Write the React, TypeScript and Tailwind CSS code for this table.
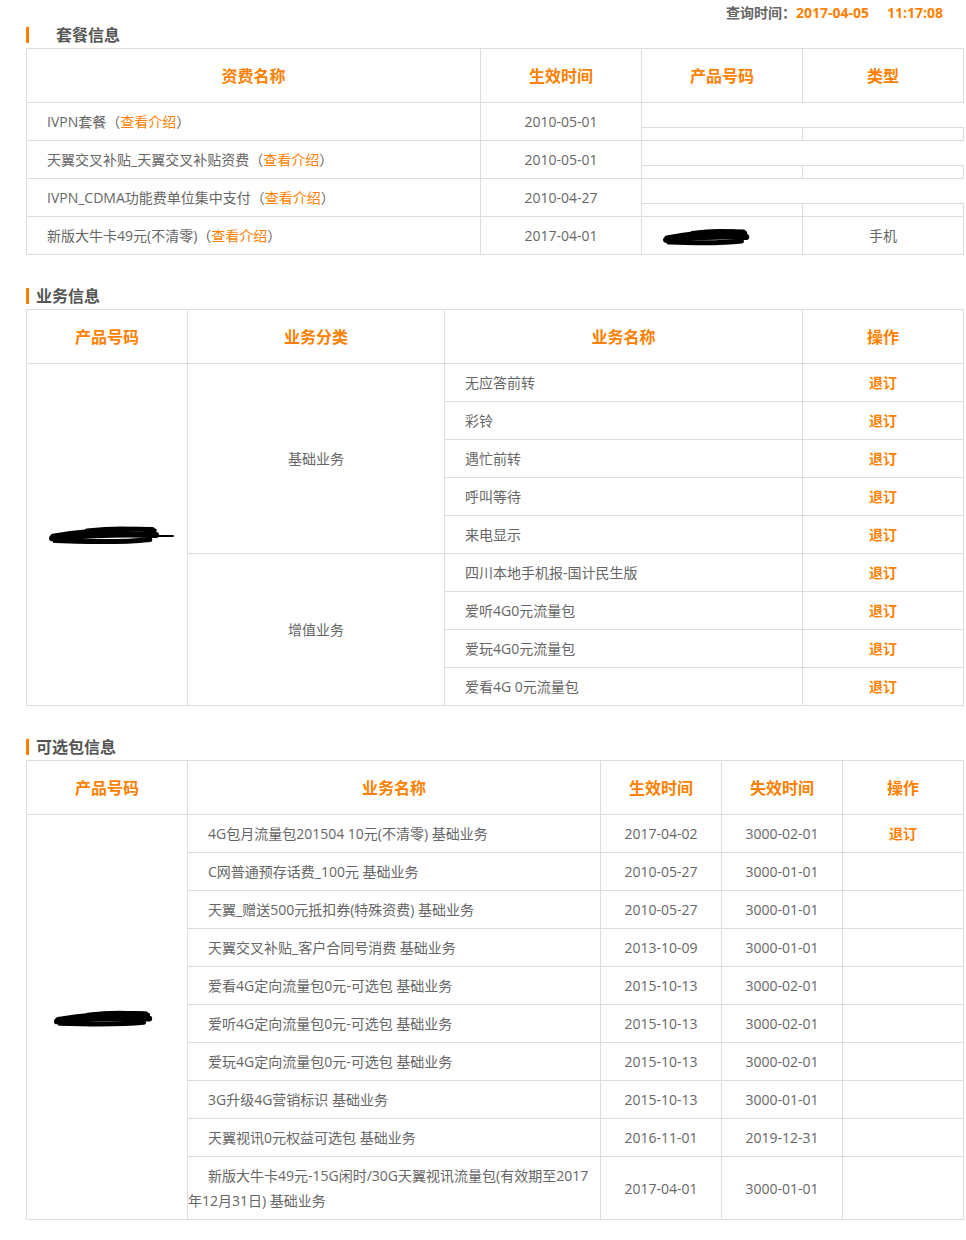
import React from 'react';

const ORANGE = 'text-[#ff7f00]';

// black scribble used to hide phone numbers
function Scribble({ w, h, tail = false }: { w: number; h: number; tail?: boolean }) {
  return (
    <svg width={w} height={h} viewBox={`0 0 ${w} ${h}`} className="inline-block">
      <g fill="none" stroke="#000" strokeLinecap="round" strokeLinejoin="round">
        <path d={`M4 ${h * 0.55} C${w * 0.25} ${h * 0.35}, ${w * 0.55} ${h * 0.2}, ${w * 0.82} ${h * 0.25}`} strokeWidth={5} />
        <path d={`M3 ${h * 0.65} C${w * 0.3} ${h * 0.5}, ${w * 0.6} ${h * 0.45}, ${w * 0.85} ${h * 0.5}`} strokeWidth={6} />
        <path d={`M6 ${h * 0.75} C${w * 0.3} ${h * 0.8}, ${w * 0.55} ${h * 0.85}, ${w * 0.8} ${h * 0.7}`} strokeWidth={5} />
        <path d={`M${w * 0.3} ${h * 0.3} C${w * 0.45} ${h * 0.2}, ${w * 0.65} ${h * 0.15}, ${w * 0.84} ${h * 0.3}`} strokeWidth={4} />
        {tail && <path d={`M${w * 0.8} ${h * 0.55} L${w - 2} ${h * 0.55}`} strokeWidth={2} />}
      </g>
    </svg>
  );
}

function Title({ text, indent }: { text: string; indent: string }) {
  return (
    <div className="h-[24px] flex items-center pb-[2px]">
      <span className="w-[3px] h-[16px] bg-[#ff7f00]" />
      <span className={`${indent} text-[16px] font-bold text-[#555]`}>{text}</span>
    </div>
  );
}

const th = `border border-[#ddd] h-[54px] text-center text-[16px] font-bold ${ORANGE}`;
const td = 'border border-[#ddd] h-[38px] text-center';
const tdName = 'border border-[#ddd] h-[38px] text-left indent-[20px]';

function Intro({ name }: { name: string }) {
  return (
    <>
      {name}（<span className={ORANGE}>查看介绍</span>）
    </>
  );
}

const packages = [
  { name: 'IVPN套餐', date: '2010-05-01' },
  { name: '天翼交叉补贴_天翼交叉补贴资费', date: '2010-05-01' },
  { name: 'IVPN_CDMA功能费单位集中支付', date: '2010-04-27' },
];

const basic = ['无应答前转', '彩铃', '遇忙前转', '呼叫等待', '来电显示'];
const extra = ['四川本地手机报-国计民生版', '爱听4G0元流量包', '爱玩4G0元流量包', '爱看4G 0元流量包'];

const optional = [
  { name: '4G包月流量包201504 10元(不清零) 基础业务', start: '2017-04-02', end: '3000-02-01', op: true },
  { name: 'C网普通预存话费_100元 基础业务', start: '2010-05-27', end: '3000-01-01' },
  { name: '天翼_赠送500元抵扣券(特殊资费) 基础业务', start: '2010-05-27', end: '3000-01-01' },
  { name: '天翼交叉补贴_客户合同号消费 基础业务', start: '2013-10-09', end: '3000-01-01' },
  { name: '爱看4G定向流量包0元-可选包 基础业务', start: '2015-10-13', end: '3000-02-01' },
  { name: '爱听4G定向流量包0元-可选包 基础业务', start: '2015-10-13', end: '3000-02-01' },
  { name: '爱玩4G定向流量包0元-可选包 基础业务', start: '2015-10-13', end: '3000-02-01' },
  { name: '3G升级4G营销标识 基础业务', start: '2015-10-13', end: '3000-01-01' },
  { name: '天翼视讯0元权益可选包 基础业务', start: '2016-11-01', end: '2019-12-31' },
];

export default function App() {
  return (
    <div
      className="w-[966px] bg-white pl-[26px] pr-[3px] pb-[20px] text-[14px] text-[#666]"
      style={{ fontFamily: '"Open Sans", "Noto Sans CJK SC", sans-serif' }}
    >
      <div className="h-[24px] flex items-center justify-end pr-[20px] text-[14px] font-bold">
        <span className="text-[#666]">查询时间：</span>
        <span className={ORANGE}>2017-04-05</span>
        <span className={`${ORANGE} ml-[18px]`}>11:17:08</span>
      </div>

      <Title text="套餐信息" indent="ml-[27px]" />
      <table className="w-full table-fixed border-collapse">
        <colgroup>
          <col className="w-[454px]" />
          <col className="w-[161px]" />
          <col className="w-[161px]" />
          <col className="w-[161px]" />
        </colgroup>
        <tbody>
          <tr>
            <td className={th}>资费名称</td>
            <td className={th}>生效时间</td>
            <td className={th}>产品号码</td>
            <td className={th}>类型</td>
          </tr>
          {packages.map((p) => (
            <tr key={p.name}>
              <td className={tdName}>
                <Intro name={p.name} />
              </td>
              <td className={td}>{p.date}</td>
              <td colSpan={2} className="p-0 h-[38px] border-l border-b border-[#ddd] align-top">
                <div className="h-[24px]" />
                <div className="flex h-[13px] border-t border-[#ddd]">
                  <div className="w-[161px] border-r border-[#ddd]" />
                  <div className="flex-1 border-r border-[#ddd]" />
                </div>
              </td>
            </tr>
          ))}
          <tr>
            <td className={tdName}>
              <Intro name="新版大牛卡49元(不清零)" />
            </td>
            <td className={td}>2017-04-01</td>
            <td className={td}>
              <span className="inline-block -ml-[20px]">
                <Scribble w={98} h={20} />
              </span>
            </td>
            <td className={td}>手机</td>
          </tr>
        </tbody>
      </table>

      <div className="mt-[30px]">
        <Title text="业务信息" indent="ml-[7px]" />
      </div>
      <table className="w-full table-fixed border-collapse">
        <colgroup>
          <col className="w-[161px]" />
          <col className="w-[257px]" />
          <col className="w-[358px]" />
          <col className="w-[161px]" />
        </colgroup>
        <tbody>
          <tr>
            <td className={th}>产品号码</td>
            <td className={th}>业务分类</td>
            <td className={th}>业务名称</td>
            <td className={th}>操作</td>
          </tr>
          {basic.map((b, i) => (
            <tr key={b}>
              {i === 0 && (
                <td rowSpan={9} className="border border-[#ddd] text-center">
                  <span className="inline-block ml-[10px]">
                    <Scribble w={126} h={22} tail />
                  </span>
                </td>
              )}
              {i === 0 && (
                <td rowSpan={5} className="border border-[#ddd] text-center">
                  基础业务
                </td>
              )}
              <td className={tdName}>{b}</td>
              <td className={`${td} font-bold ${ORANGE}`}>退订</td>
            </tr>
          ))}
          {extra.map((b, i) => (
            <tr key={b}>
              {i === 0 && (
                <td rowSpan={4} className="border border-[#ddd] text-center">
                  增值业务
                </td>
              )}
              <td className={tdName}>{b}</td>
              <td className={`${td} font-bold ${ORANGE}`}>退订</td>
            </tr>
          ))}
        </tbody>
      </table>

      <div className="mt-[30px]">
        <Title text="可选包信息" indent="ml-[7px]" />
      </div>
      <table className="w-full table-fixed border-collapse">
        <colgroup>
          <col className="w-[161px]" />
          <col className="w-[413px]" />
          <col className="w-[121px]" />
          <col className="w-[121px]" />
          <col className="w-[121px]" />
        </colgroup>
        <tbody>
          <tr>
            <td className={th}>产品号码</td>
            <td className={th}>业务名称</td>
            <td className={th}>生效时间</td>
            <td className={th}>失效时间</td>
            <td className={th}>操作</td>
          </tr>
          {optional.map((o, i) => (
            <tr key={o.name}>
              {i === 0 && (
                <td rowSpan={10} className="border border-[#ddd] text-center">
                  <span className="inline-block ml-[6px]">
                    <Scribble w={112} h={19} />
                  </span>
                </td>
              )}
              <td className={tdName}>{o.name}</td>
              <td className={td}>{o.start}</td>
              <td className={td}>{o.end}</td>
              <td className={`${td} font-bold ${ORANGE}`}>{o.op ? '退订' : ''}</td>
            </tr>
          ))}
          <tr>
            <td className="border border-[#ddd] h-[63px] text-left leading-[25px] whitespace-nowrap">
              <span className="pl-[20px]">新版大牛卡49元-15G闲时/30G天翼视讯流量包(有效期至2017</span>
              <br />
              年12月31日) 基础业务
            </td>
            <td className={td}>2017-04-01</td>
            <td className={td}>3000-01-01</td>
            <td className={td} />
          </tr>
        </tbody>
      </table>
    </div>
  );
}
